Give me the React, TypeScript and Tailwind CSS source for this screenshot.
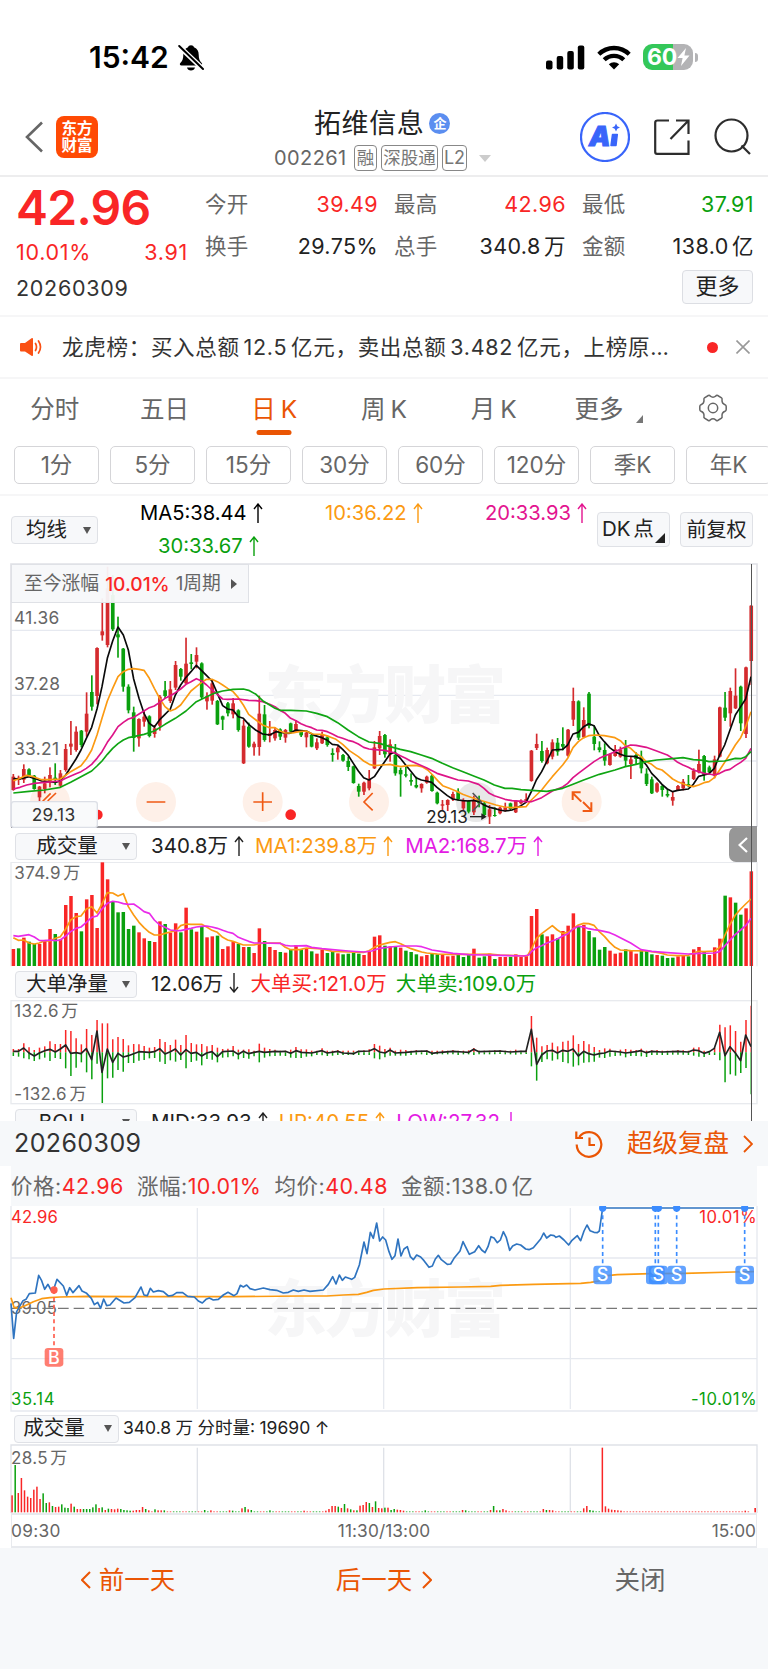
import type { ReactNode } from 'react';

// All charts draw on a 3-units-per-pixel grid
const FIRST_X = 40;
const STEP = 15.7;

const RED = '#d42b2e';
const GREEN = '#0aa00e';

// high,bodyTop,bodyBottom,low,colour
const CANDLES = `657,665,705,707,r 662,668,675,690,r 628,642,674,684,r 640,643,662,664,g 660,662,702,704,g 693,695,727,739,r 665,685,702,715,r
637,660,682,697,r 625,668,672,690,g 645,655,692,697,r 567,582,645,650,r 498,566,575,600,r 514,530,585,590,r 525,527,570,577,g 412,476,530,545,r
361,411,455,467,g 277,279,423,448,r 130,229,241,257,r 35,100,270,277,r 60,120,223,228,g 185,238,247,308,g 279,281,395,410,g 388,395,466,475,g
455,472,549,590,g 490,492,550,575,r 465,485,500,515,r 481,484,543,547,g 510,520,537,548,r 420,425,512,527,r 378,406,423,430,g 378,403,438,444,r
318,330,398,405,r 339,342,365,377,g 248,326,385,387,r 297,322,327,343,g 277,300,320,340,r 322,325,427,432,g 412,424,439,464,r 372,385,437,449,r
435,438,508,510,g 482,484,494,525,g 441,445,475,484,g 429,445,478,490,r 463,466,525,530,g 495,512,625,627,r 503,515,575,578,g 560,566,577,602,r
422,476,576,602,r 450,478,555,560,g 498,535,543,562,r 517,525,550,557,r 520,523,545,555,g 522,525,548,563,r 503,505,530,537,g 495,507,530,533,r
525,528,541,546,g 527,533,547,577,r 537,540,575,577,g 550,562,580,585,r 530,537,565,567,r 542,547,570,575,g 580,594,600,620,g 573,578,592,614,r
597,600,617,620,g 605,618,636,648,g 632,634,684,686,g 686,693,710,725,g 680,683,710,720,r 645,672,700,706,r 558,577,640,642,r 528,543,580,600,r
537,540,598,608,g 553,568,598,620,r 567,600,655,662,g 638,645,658,725,g 635,658,662,667,g 655,675,680,692,g 665,690,697,700,g 685,687,700,713,r
662,665,683,686,r 657,662,708,710,g 710,713,745,748,g 735,748,752,767,r 733,735,750,768,r 710,717,733,738,r 700,710,733,737,g 730,737,760,765,r
735,737,770,775,g 722,738,772,780,r 722,735,745,757,g 740,745,780,785,g 750,763,785,807,r 757,780,783,785,g 755,758,775,778,r 743,757,765,770,r
743,745,762,767,g 735,737,772,774,r 733,737,745,748,r 715,732,740,743,r 585,587,678,680,r 536,567,579,585,r 558,588,618,623,g 578,585,625,628,r
553,562,605,613,r 549,563,590,602,g 517,567,575,586,g 522,524,602,605,r 398,438,494,513,r 436,439,548,555,g 457,495,547,550,r 411,416,513,520,g
512,545,567,586,g 559,577,585,592,g 565,585,617,632,g 595,597,630,632,r 570,583,603,605,r 575,584,605,608,r 555,577,617,635,g 605,613,627,672,r
592,600,612,627,g 587,605,640,655,g 640,656,687,693,g 665,673,715,717,g 682,685,710,713,r 690,693,705,725,g 703,717,722,727,g 710,726,737,752,r
690,693,706,708,r 672,680,700,706,r 660,687,692,697,g 640,647,672,675,r 584,627,652,655,r 600,603,660,677,g 632,637,652,658,g 602,613,662,670,r
455,457,605,607,r 411,458,488,498,g 398,408,475,515,r 340,422,460,462,r 392,395,505,528,g 335,337,537,549,r 150,152,318,390,r`
  .split(/\s+/)
  .map(c => {
    const [high, top, bottom, low, dir] = c.split(',');
    return { high: +high, top: +top, bottom: +bottom, low: +low, up: dir === 'r' };
  });

const MA5 =
  '40,671 60,672 87,665 103,670 125,678 150,680 166,682 180,678 197,660 228,612 243,585 259,550 275,517 291,462 306,395 322,310 338,258 354,216 370,240 385,285 401,372 417,430 432,475 448,505 463,516 479,494 495,478 511,462 526,420 542,390 558,367 573,350 589,331 605,347 620,362 636,378 652,415 668,452 683,462 699,465 715,485 730,490 746,508 768,526 788,537 809,540 828,530 848,533 868,535 888,525 919,528 943,541 966,548 982,556 997,568 1013,570 1028,583 1044,600 1060,625 1075,648 1091,668 1107,675 1123,665 1138,643 1154,620 1170,597 1185,592 1201,610 1217,630 1232,648 1248,668 1264,675 1279,678 1295,682 1311,697 1327,710 1342,722 1358,732 1374,735 1389,737 1405,738 1421,736 1436,740 1452,750 1468,757 1483,760 1499,765 1515,768 1536,765 1563,752 1578,742 1594,710 1609,675 1625,650 1641,618 1657,585 1688,583 1703,570 1719,537 1735,532 1751,515 1766,506 1782,512 1798,542 1813,560 1829,578 1845,590 1861,598 1876,603 1908,605 1923,612 1939,630 1955,655 1970,670 1986,688 2002,702 2018,710 2033,706 2065,702 2080,688 2096,664 2112,660 2127,656 2143,640 2159,600 2174,570 2190,525 2206,480 2222,455 2237,432 2253,365';
const MA10 =
  '40,677 55,672 80,661 100,665 125,674 150,674 181,672 212,650 243,632 259,612 275,585 291,540 306,490 322,438 338,400 354,365 370,350 385,343 401,341 417,343 432,346 448,370 463,400 479,430 495,455 511,468 526,462 542,450 558,428 573,408 589,395 605,382 620,373 636,373 652,380 668,390 683,400 699,410 715,428 730,450 746,478 768,495 788,510 809,518 825,518 840,528 856,534 878,534 898,530 918,528 938,537 966,538 988,545 1008,553 1028,568 1048,587 1075,605 1091,618 1108,628 1123,632 1148,630 1170,628 1185,632 1203,635 1223,632 1248,631 1268,636 1283,645 1298,660 1313,677 1328,692 1348,700 1368,708 1388,718 1408,725 1428,732 1448,738 1468,744 1488,750 1513,756 1536,758 1578,755 1594,735 1625,705 1641,685 1657,665 1672,648 1688,630 1703,610 1719,578 1735,560 1751,548 1766,542 1786,540 1813,542 1845,548 1861,557 1876,572 1892,580 1908,595 1923,605 1939,620 1955,628 1970,640 1986,645 2002,658 2018,672 2033,680 2049,686 2065,692 2080,695 2096,690 2112,683 2127,680 2143,668 2159,645 2174,622 2190,597 2206,570 2222,548 2237,515 2253,470';
const MA20 =
  '40,702 60,697 80,690 103,685 134,682 181,678 197,670 228,656 243,650 259,640 275,628 291,610 306,590 322,562 338,540 354,515 370,502 385,492 401,487 417,477 432,468 448,458 463,453 479,442 495,430 511,422 526,413 542,402 558,388 573,380 589,371 605,378 620,390 636,405 652,418 668,432 683,433 715,432 746,436 768,437 788,440 809,448 825,455 840,466 856,475 872,490 888,497 903,506 919,513 935,518 950,525 966,526 982,530 997,537 1013,545 1028,550 1044,556 1060,560 1075,567 1091,577 1107,582 1123,584 1154,586 1185,594 1201,602 1217,610 1232,618 1248,625 1279,638 1311,655 1342,665 1374,675 1405,678 1436,688 1452,700 1468,715 1483,722 1515,733 1536,737 1578,740 1594,740 1625,728 1657,708 1688,696 1703,685 1719,668 1735,655 1751,643 1766,632 1782,620 1798,610 1813,603 1829,597 1845,590 1861,583 1876,576 1892,570 1908,571 1939,577 1970,588 2002,600 2018,610 2033,622 2049,630 2065,637 2080,645 2096,650 2112,655 2127,657 2143,660 2159,655 2174,647 2190,643 2206,632 2222,622 2237,610 2253,580';
const MA30 =
  '40,714 87,709 134,705 181,697 212,682 243,665 275,648 291,633 306,618 322,598 338,580 354,566 370,555 385,548 401,545 432,538 463,528 495,508 526,490 558,468 589,440 620,425 636,418 652,412 668,408 699,403 730,402 746,406 768,418 788,437 809,450 825,460 840,466 872,466 919,468 950,475 982,485 1013,503 1044,525 1075,545 1107,561 1138,565 1170,575 1201,583 1232,590 1264,600 1295,610 1327,625 1358,638 1389,650 1421,663 1452,675 1483,690 1515,700 1536,700 1563,704 1594,706 1641,709 1688,700 1719,688 1751,675 1798,658 1845,645 1876,635 1908,628 1939,620 1970,615 2018,611 2049,608 2080,614 2112,616 2127,620 2174,618 2206,610 2222,611 2237,605 2253,590';

const VOLUMES = `372r 370g 338r 350g 357g 357r 347r 312r 327g 343r 240r 213r 264r 319g 223r 210r 309r 112r 163r 230g 262g 261g 312g 302g 322r 340r 348g 351r 289r 297g
323r 295r 322g 248r 313g 320r 303g 337r 334r 332g 372r 364r 351r 357g 366r 366g 384r 310r 348g 366r 375r 381g 383r 375g 360r 373g 370r 379g 386r 374r
384g 381g 385r 388g 386g 383g 386g 390r 380r 335r 331r 362g 364r 366g 368r 377g 381g 388g 394r 390r 386g 388g 390r 394r 392r 390g 396g 390g 371r 398g
394g 386r 402g 396r 396r 396g 388r 396r 390r 273r 252r 328g 334r 328r 340g 318r 302r 265r 303g 300r 318g 337g 374g 366g 377r 386r 383r 373g 377r 386r
375g 377g 388g 390r 392g 399g 398g 394r 390r 394g 373r 366r 380g 390r 367r 341r 212g 217r 233g 269g 250r 139r`.split(/\s+/);

const VOL_MA1 =
  '40,338 55,346 71,345 87,354 103,357 118,354 134,347 150,348 166,340 181,335 197,312 212,285 228,275 243,273 259,252 275,245 291,264 306,237 322,203 338,204 354,213 370,206 385,245 401,270 417,292 432,308 448,322 463,330 479,330 495,325 511,321 526,318 542,302 558,297 573,298 605,298 620,306 636,316 652,322 668,337 683,345 699,349 715,355 730,360 762,360 778,356 793,354 840,354 856,367 872,374 900,374 919,369 966,372 997,379 1045,381 1092,382 1107,377 1123,367 1139,360 1155,356 1170,352 1186,350 1202,356 1217,364 1233,371 1249,376 1265,381 1280,384 1312,387 1343,388 1437,388 1469,387 1500,390 1547,392 1582,393 1594,372 1610,340 1625,326 1641,314 1657,302 1672,315 1688,325 1704,322 1719,312 1735,300 1751,295 1766,296 1782,301 1798,320 1814,335 1829,352 1845,367 1861,375 1892,377 1939,378 1971,382 1986,385 2002,390 2033,392 2065,391 2080,385 2096,379 2112,380 2143,378 2159,367 2175,330 2190,298 2206,270 2222,252 2237,237 2253,222';
const VOL_MA2 =
  '40,332 55,334 87,329 103,336 118,346 134,347 150,345 166,347 181,345 197,333 212,320 228,310 243,306 259,292 275,277 291,273 306,252 322,235 338,229 354,231 370,236 385,238 401,237 417,248 432,260 448,265 463,285 479,300 495,307 511,315 526,317 542,317 558,313 573,310 589,306 605,304 620,303 636,306 652,310 668,316 683,321 699,325 715,337 730,343 746,349 762,354 778,354 840,355 856,361 872,363 919,362 935,367 966,371 997,374 1045,378 1092,381 1115,378 1139,370 1170,366 1202,363 1249,363 1265,365 1280,370 1296,375 1327,380 1359,385 1406,389 1453,390 1500,391 1572,393 1586,390 1594,380 1610,368 1625,362 1641,354 1657,348 1672,342 1688,333 1704,326 1719,312 1735,304 1751,306 1766,311 1782,314 1798,316 1829,323 1845,330 1861,338 1892,354 1923,374 1955,379 2002,383 2065,387 2096,385 2143,384 2159,380 2175,362 2190,345 2206,328 2222,315 2237,302 2253,280';

// buy top / sell bottom around the zero line
const NET = `672/693 672/695 655/700 667/703 675/708 668/703 664/698 649/708 657/699 657/702 615/730 618/753 640/728 658/712 612/742 630/763 585/716 595/834 595/760
643/758 636/735 642/740 661/714 657/714 658/707 663/705 668/700 666/699 642/710 651/717 660/706 644/710 660/705 630/730 654/711 658/707 657/721 664/702 660/704
668/712 672/698 671/697 663/694 674/703 674/699 673/701 677/694 656/712 668/698 672/694 674/693 677/692 677/693 674/698 666/699 673/699 673/695 677/694 677/690
670/691 677/693 677/692 675/690 677/690 677/690 677/690 677/690 676/690 673/690 657/700 662/703 672/697 668/692 677/692 674/692 675/692 677/690 675/689 677/688
676/690 677/690 677/688 676/688 677/688 675/688 677/690 677/688 676/688 669/690 677/688 677/688 677/688 676/688 675/687 677/688 677/688 674/689 677/688 676/687
573/724 638/767 664/711 660/703 653/707 664/703 650/711 647/715 631/725 657/721 648/713 658/712 666/710 675/698 670/699 671/695 677/693 674/692 672/697 674/693
675/693 671/694 677/696 676/690 675/690 677/690 677/690 677/689 675/689 676/689 677/690 668/692 667/695 677/696 678/690 668/690 599/706 607/772 601/748 618/752
650/744 585/729 542/808`.split(/\s+/);

const NET_LINE =
  '40,679 55,679 71,669 87,684 103,693 118,684 134,677 150,673 166,681 181,672 197,660 212,685 228,683 243,686 259,671 275,704 291,618 306,742 322,672 338,712 354,685 370,696 385,692 401,686 417,680 448,682 463,680 479,671 495,687 511,680 526,672 542,690 558,674 573,685 589,682 605,693 620,684 636,680 652,695 668,680 699,678 715,688 730,679 746,686 762,682 778,679 793,682 825,679 840,680 856,679 872,685 888,677 904,682 935,684 966,677 982,684 1013,679 1029,684 1060,686 1076,679 1107,678 1123,671 1139,681 1155,684 1170,675 1186,684 1217,682 1249,679 1280,678 1296,685 1312,683 1359,679 1390,681 1406,682 1421,673 1437,680 1500,678 1531,681 1562,679 1578,679 1594,613 1610,718 1625,690 1641,678 1657,676 1672,684 1688,676 1704,679 1719,672 1735,693 1751,679 1766,686 1782,690 1798,686 1814,684 1829,678 1861,681 1877,684 1908,680 1923,677 1939,683 1955,679 1986,681 2033,679 2065,681 2080,675 2096,677 2112,685 2128,680 2143,670 2159,622 2175,692 2190,665 2206,684 2222,707 2237,630 2253,665';

const PRICE =
  '33,565 41,670 50,590 69,557 78,553 88,536 106,534 116,481 125,497 134,523 144,508 153,525 162,520 171,493 190,513 200,541 209,518 219,533 237,512 246,528 260,535 274,550 283,569 293,562 302,580 311,552 320,572 330,570 348,549 372,564 388,562 405,548 423,516 432,540 442,542 451,520 460,531 475,527 490,530 505,543 518,541 530,533 548,533 563,544 583,546 595,558 607,564 618,553 628,549 640,555 655,553 670,540 684,532 702,542 711,536 721,511 730,516 740,510 750,521 765,525 790,519 810,524 830,526 850,534 865,532 880,525 895,529 912,525 930,529 970,525 985,508 998,485 1008,507 1018,480 1027,496 1036,486 1055,493 1064,487 1078,450 1092,381 1101,416 1111,352 1120,370 1130,324 1139,378 1148,366 1157,375 1167,410 1176,433 1185,422 1194,372 1203,423 1212,402 1222,395 1231,425 1240,434 1250,420 1262,426 1272,437 1287,457 1297,453 1306,432 1315,421 1324,434 1342,448 1352,447 1362,430 1380,408 1389,380 1408,418 1424,410 1436,392 1445,405 1455,413 1464,395 1473,365 1482,369 1492,383 1501,375 1510,350 1519,368 1529,406 1538,393 1550,387 1562,390 1577,402 1587,404 1600,398 1622,372 1631,354 1640,369 1652,360 1662,362 1668,367 1678,363 1692,375 1706,390 1716,376 1732,362 1742,377 1752,348 1761,330 1770,347 1782,352 1792,353 1798,348 1808,279 2262,279';
const AVERAGE =
  '33,548 42,577 55,580 75,572 100,560 125,551 150,548 180,546 260,544 400,545 700,545 900,543 980,543 1030,540 1075,538 1100,532 1120,526 1152,522 1252,518 1382,516 1472,514 1502,511 1602,508 1742,505 1772,502 1797,498 1822,482 1852,479 1952,476 2052,475 2202,471 2262,470';

// minute volume, height above the base line; minutes left out are near zero
const MINUTES: Record<number, string> = {
  0: '51r', 1: '142g', 2: '58r', 3: '103r', 4: '66r', 5: '47r', 6: '43r', 7: '68r', 8: '77r', 9: '40r', 10: '57g', 11: '28g', 12: '30r', 13: '19g', 14: '16r',
  15: '17r', 16: '24g', 17: '14g', 18: '13g', 19: '26r', 20: '17g', 21: '10r', 22: '10r', 23: '10g', 24: '10g', 25: '10g', 26: '15g', 27: '24g', 28: '13r',
  29: '15g', 30: '7r', 31: '11g', 32: '10r', 33: '9r', 34: '11r', 35: '10g', 36: '7g', 37: '6g', 38: '5g', 39: '5r', 40: '7r', 41: '7r', 42: '16r', 43: '10g', 44: '6r',
  46: '9g', 47: '6r', 48: '6r', 49: '6g', 62: '7g', 64: '6r', 70: '6r', 71: '5g', 74: '12r', 75: '16g', 76: '9r', 77: '7g', 83: '6g', 94: '5r', 101: '5r', 102: '10r', 103: '19r', 104: '19r',
  105: '17g', 106: '13r', 107: '25g', 108: '12r', 109: '9g', 110: '6r', 111: '6g', 112: '20r', 113: '22r', 114: '31r', 115: '28g', 116: '16r', 117: '33g', 118: '13r',
  119: '12r', 120: '14g', 121: '14r', 122: '7g', 123: '10g', 124: '8r', 125: '7r', 126: '5r', 133: '6g', 145: '7r', 146: '6g', 154: '7r', 155: '19g', 156: '6r', 157: '6g', 158: '10r',
  159: '6r', 171: '10r', 172: '7g', 173: '7r', 174: '6r', 184: '12r', 185: '19r', 186: '7g', 187: '5g', 190: '194r', 191: '18r', 192: '11r', 193: '8r', 194: '7r', 195: '6r', 196: '5r', 236: '5r', 239: '13r',
};

const PERIODS = ['1分', '5分', '15分', '30分', '60分', '120分', '季K', '年K'];
const SELLS = [1808, 1966, 1975, 2030, 2234];

function Line({ points, color, width = 5 }: { points: string; color: string; width?: number }) {
  return <polyline points={points} fill="none" stroke={color} strokeWidth={width} strokeLinejoin="round" />;
}

function Watermark({ y }: { y: number }) {
  return (
    <text x="794" y={y} fontSize="186" fontWeight="900" textLength="724" fill="#f6f6f7">
      东方财富
    </text>
  );
}

function Stat({ label, value, color = 'text-[#222]' }: { label: string; value: string; color?: string }) {
  return (
    <div className="flex items-center justify-between">
      <span className="text-[21.5px] tracking-[0.3px] text-[#666]">{label}</span>
      <span className={`-mr-px text-[21.5px] tracking-[0.4px] [word-spacing:-3px] ${color}`}>{value}</span>
    </div>
  );
}

function Picker({ className, children }: { className: string; children: ReactNode }) {
  return (
    <div className={`flex shrink-0 items-center justify-center rounded border border-[#dfe1e6] bg-[#f7f8fa] text-[20.5px] text-[#222] ${className}`}>
      {children}
      <svg viewBox="0 0 8 7" className="absolute right-1.5 h-[7px] w-2">
        <path d="M0 0H8L4 7Z" fill="#555" />
      </svg>
    </div>
  );
}

function Arrow({ down = false }: { down?: boolean }) {
  return (
    <svg viewBox="0 0 10 20" className={`-mt-1 ml-1.5 inline-block h-5 w-2.5 ${down ? 'rotate-180' : ''}`} fill="none" stroke="currentColor" strokeWidth="1.4">
      <path d="M5 20V1M1 6L5 1L9 6" />
    </svg>
  );
}

function StatusBar() {
  return (
    <div className="flex h-[90px] items-center pt-6 pl-[89px]">
      <span className="w-[83px] text-[30px] leading-none font-semibold text-black">15:42</span>
      <svg viewBox="0 0 26 27" className="ml-[6px] h-[27px] w-[26px]">
        <path
          d="M13 1.2c1.6 0 2.7.8 3 2 3.4 1.2 4.7 4 4.7 7.5 0 4.4 1 6.3 3 8.3.9.9.4 2.6-1.1 2.6H3.4c-1.5 0-2-1.7-1.1-2.6 2-2 3-3.9 3-8.3 0-3.5 1.3-6.3 4.7-7.5.3-1.2 1.4-2 3-2ZM9 23.5h8c-.4 1.8-2 3-4 3s-3.6-1.2-4-3Z"
          fill="#000"
        />
        <path d="M1 2.2L25.5 25.5" stroke="#fff" strokeWidth="5" />
        <path d="M1.2 2L25 25" stroke="#000" strokeWidth="2" strokeLinecap="round" />
      </svg>
      <svg viewBox="0 0 39 25" className="ml-[342px] h-[25px] w-[39px]">
        <rect x="0" y="15.5" width="6.5" height="9" rx="2" />
        <rect x="10.7" y="11" width="6.5" height="13.5" rx="2" />
        <rect x="21.3" y="6" width="6.5" height="18.5" rx="2" />
        <rect x="31.8" y="0.5" width="6.5" height="24" rx="2" />
      </svg>
      <svg viewBox="0 0 34 25" className="ml-3 h-[25px] w-[34px]" fill="none" stroke="#000" strokeWidth="4.3">
        <path d="M1.8 9.2C10.2.9 23.8.9 32.2 9.2" />
        <path d="M7.2 14.8C12.6 9.5 21.4 9.5 26.8 14.8" />
        <path d="M17 24.5L11.8 19.2C14.8 16.5 19.2 16.5 22.2 19.2Z" fill="#000" stroke="none" />
      </svg>
      <div className="ml-3 flex h-[26px] w-[50px] items-center overflow-hidden rounded-[9px] bg-[linear-gradient(90deg,#34c759_60%,#b3b3b5_60%)] pl-[4px]">
        <span className="w-[30px] text-[23px] leading-none font-bold tracking-[-0.3px] text-white">60</span>
        <svg viewBox="0 0 13 18" className="h-[18px] w-[13px]">
          <path d="M9 0L.5 10H5.6L4 18L12.5 7.6H7.4Z" fill="#fff" />
        </svg>
      </div>
      <div className="ml-[2px] h-[9px] w-[3px] rounded-r-full bg-[#b3b3b5]" />
    </div>
  );
}

function Header() {
  return (
    <div className="flex h-[87px] items-center border-b-2 border-[#ededee] pt-1">
      <svg viewBox="0 0 18 32" className="mt-1 ml-[25px] h-8 w-[18px]" fill="none" stroke="#666" strokeWidth="2.6">
        <path d="M17 1.5L2 16L17 30.5" />
      </svg>
      <div className="mt-1 ml-[13px] flex h-[42px] w-[42px] flex-col items-center justify-center rounded-[8px] bg-[#ff4a04] text-[15.5px] leading-[17px] font-bold text-white">
        <span>东方</span>
        <span>财富</span>
      </div>
      <div className="mt-[7px] ml-[176px] flex w-[216px] flex-col items-start">
        <div className="ml-[40px] flex h-[38px] items-center text-[27px] leading-none tracking-[0.6px] text-[#222]">
          拓维信息
          <span className="ml-[5px] flex h-[21px] w-[21px] items-center justify-center rounded-full bg-[#5b8ef0] text-[13px] font-bold tracking-normal text-white">企</span>
        </div>
        <div className="mt-[2px] flex h-[28px] items-center gap-1 text-[17.5px] leading-none text-[#777]">
          <span className="w-[76px] text-[20px] tracking-[0.4px] text-[#666]">002261</span>
          <span className="flex h-[26px] w-[23px] items-center justify-center rounded border border-[#888]">融</span>
          <span className="flex h-[26px] w-[57px] items-center justify-center rounded border border-[#888]">深股通</span>
          <span className="flex h-[26px] w-[25px] items-center justify-center rounded border border-[#888] text-[18px]">L2</span>
          <svg viewBox="0 0 12 7" className="ml-2 h-[7px] w-3 shrink-0">
            <path d="M0 0H12L6 7Z" fill="#ccc" />
          </svg>
        </div>
      </div>
      <svg viewBox="0 0 50 50" className="mt-1 ml-[90px] h-[50px] w-[50px]" fill="none">
        <circle cx="25" cy="25" r="24" stroke="#3965fa" strokeWidth="2.2" />
        <text x="9" y="34" fontSize="27" fontWeight="900" fontStyle="italic" fill="#3965fa" stroke="#3965fa" strokeWidth="1">
          A
        </text>
        <path d="M32.5 22.5h4.8L36 33.500h-5Z" fill="#3965fa" stroke="#3965fa" strokeWidth="1.5" strokeLinejoin="round" />
        <path d="M36 11.5l1.3 2.7 2.7 1.3-2.7 1.3L36 19.5l-1.3-2.7-2.7-1.3 2.7-1.3Z" fill="#3965fa" />
      </svg>
      <svg viewBox="0 0 36 36" className="mt-1 ml-[24px] h-9 w-9" fill="none" stroke="#2d2d2d" strokeWidth="2.2">
        <path d="M15 1.5H3.5Q1.2 1.5 1.2 3.8V33Q1.2 34.8 3 34.8H34.5V21.5M22 1.5H34.5V15M16.5 20L34 2" />
      </svg>
      <svg viewBox="0 0 37 37" className="mt-1 ml-[24px] h-[37px] w-[37px]" fill="none" stroke="#2d2d2d" strokeWidth="2.2">
        <circle cx="17.5" cy="17.5" r="16" />
        <path d="M27.5 27.5L36 36" />
      </svg>
    </div>
  );
}

function Quote() {
  return (
    <div className="flex h-[140px] border-b-2 border-[#f6f6f7] pr-[15px] pl-[16px]">
      <div className="flex w-[172px] flex-col text-[#f92626]">
        <span className="mt-[8px] text-[48px] leading-[46px] font-semibold tracking-[-0.7px]">42.96</span>
        <div className="mt-[6px] flex h-[30px] items-center justify-between text-[21.5px] tracking-[0.7px]">
          <span>10.01%</span>
          <span>3.91</span>
        </div>
        <span className="mt-[6px] text-[21.5px] leading-[30px] tracking-[0.7px] text-[#333]">20260309</span>
      </div>
      <div className="ml-[17px] flex flex-1 flex-col">
        <div className="mt-[11px] grid grid-cols-[172px_171px_171px] gap-x-[17px] gap-y-[10px]">
          <Stat label="今开" value="39.49" color="text-[#f92626]" />
          <Stat label="最高" value="42.96" color="text-[#f92626]" />
          <Stat label="最低" value="37.91" color="text-[#0aa00e]" />
          <Stat label="换手" value="29.75%" />
          <Stat label="总手" value="340.8 万" />
          <Stat label="金额" value="138.0 亿" />
        </div>
        <div className="mt-[7px] flex h-[34px] w-[71px] items-center justify-center self-end rounded border border-[#dcdee3] bg-[#f7f8fa] text-[22px] text-[#222]">更多</div>
      </div>
    </div>
  );
}

function Ticker() {
  return (
    <div className="flex h-[62px] items-center border-b-2 border-[#f6f6f7] text-[#333]">
      <svg viewBox="0 0 22 18" className="ml-5 h-[18px] w-[22px]">
        <path d="M0 6Q0 5 1 5H5L11.5.3Q13 -.3 13 1V17Q13 18.3 11.5 17.7L5 13.5H1Q0 13.5 0 12.5Z" fill="#fa5014" />
        <path d="M15.5 5.5Q17.5 9 15.5 12.5M18.5 3Q22.5 9 18.5 15" fill="none" stroke="#fa5014" strokeWidth="1.7" strokeLinecap="round" />
      </svg>
      <span className="ml-[20px] w-[612px] text-[21.5px] tracking-[0.72px] whitespace-nowrap [word-spacing:-3px]">龙虎榜：买入总额 12.5 亿元，卖出总额 3.482 亿元，上榜原…</span>
      <span className="ml-[33px] h-[11px] w-[11px] rounded-full bg-[#f92626]" />
      <svg viewBox="0 0 14 14" className="ml-[18px] h-[14px] w-[14px]" stroke="#999" strokeWidth="1.6">
        <path d="M.5 .5L13.5 13.5M13.5 .5L.5 13.5" />
      </svg>
    </div>
  );
}

function Tabs() {
  return (
    <div className="border-b-2 border-[#f6f6f7]">
      <div className="grid h-[67px] grid-cols-7 pt-[9px] pb-[14px] text-center text-[24.5px] text-[#666] [word-spacing:-2px]">
        <span className="pt-[3px]">分时</span>
        <span className="pt-[3px]">五日</span>
        <span className="relative pt-[3px] text-[#ea5504]">
          日 K
          <i className="absolute bottom-[-3px] left-1/2 h-[5px] w-[35px] -translate-x-1/2 rounded-full bg-[#ea5504]" />
        </span>
        <span className="pt-[3px]">周 K</span>
        <span className="pt-[3px]">月 K</span>
        <span className="relative pt-[3px] pr-[9px]">
          更多
          <svg viewBox="0 0 7 8" className="absolute top-[27px] right-[15px] h-2 w-[7px]">
            <path d="M0 8L7 0V8Z" fill="#777" />
          </svg>
        </span>
        <svg viewBox="0 0 28 28" className="mt-[6px] h-7 w-7 justify-self-center" fill="none" stroke="#666" strokeWidth="1.5">
          <path d="M9.3 1.5Q10.5 1 11.3 2.2Q14 4.2 16.7 2.2Q17.5 1 18.7 1.5L22.5 3.8Q23.5 4.7 23 6Q22.8 9.5 26 10.7Q27.2 11.3 27.2 12.5V15.5Q27.2 16.7 26 17.3Q22.8 18.5 23 22Q23.5 23.3 22.5 24.2L18.7 26.5Q17.5 27 16.7 25.8Q14 23.8 11.3 25.8Q10.5 27 9.3 26.5L5.5 24.2Q4.5 23.3 5 22Q5.2 18.5 2 17.3Q.8 16.7 .8 15.5V12.5Q.8 11.3 2 10.7Q5.2 9.5 5 6Q4.5 4.7 5.5 3.8Z" />
          <circle cx="14" cy="14" r="4.7" />
        </svg>
      </div>
      <div className="flex h-[48px] gap-[11px] overflow-hidden pl-[14px] text-[22.5px] text-[#666]">
        {PERIODS.map(p => (
          <span key={p} className="flex h-[38px] w-[85px] shrink-0 items-center justify-center rounded-[5px] border border-[#d5d5d8]">
            {p}
          </span>
        ))}
      </div>
    </div>
  );
}

function AverageRow() {
  return (
    <div className="flex h-[67px] pl-[11px] text-[20.5px]">
      <Picker className="relative mt-[20px] h-[28px] w-[87px] pr-4">均线</Picker>
      <div className="ml-[42px] grid w-[452px] grid-cols-[185px_160px_1fr] grid-rows-[33px_33px] items-center pt-px text-[20.2px] whitespace-nowrap text-black">
        <span>MA5:38.44<Arrow /></span>
        <span className="text-[#fb9a12]">10:36.22<Arrow /></span>
        <span className="text-[#e3148f]">20:33.93<Arrow /></span>
        <span className="pl-[18px] text-[#0aa00e]">30:33.67<Arrow /></span>
      </div>
      <div className="relative mt-[16px] ml-[5px] flex h-[35px] w-[73px] items-center rounded border border-[#dfe1e6] bg-[#f7f8fa] pl-[4px] text-[#222] [word-spacing:-3px]">
        DK 点
        <svg viewBox="0 0 10 10" className="absolute right-1 bottom-[3px] h-2.5 w-2.5">
          <path d="M0 10L10 0V10Z" fill="#222" />
        </svg>
      </div>
      <div className="mt-[16px] ml-[10px] flex h-[35px] w-[73px] items-center justify-center rounded border border-[#dfe1e6] bg-[#f7f8fa] text-[20px] text-[#222]">前复权</div>
    </div>
  );
}

function CandleChart() {
  return (
    <div className="relative h-[268px]">
      <svg viewBox="0 24 2304 804" className="block h-[268px] w-[768px]">
        {[226, 421, 618].map(y => (
          <path key={y} d={`M33 ${y}H2271`} stroke="#e6e9f0" strokeWidth="4" />
        ))}
        <path d="M33 815V27H2271V815" fill="none" stroke="#e0e1e6" strokeWidth="5" />
        <Watermark y={490} />
        {[150, 468, 788, 1107, 1745].map(x => (
          <circle key={x} cx={x} cy="741" r="60" fill="#fef0e8" />
        ))}
        <circle cx="1428" cy="741" r="60" fill="#e8e8e8" />
        <text x="42" y="207" fontSize="52" letterSpacing="1" fill="#666">41.36</text>
        <text x="42" y="404" fontSize="52" letterSpacing="1" fill="#666">37.28</text>
        <text x="42" y="601" fontSize="52" letterSpacing="1" fill="#666">33.21</text>
        {CANDLES.map((c, i) => {
          const x = FIRST_X + i * STEP;
          return (
            <g key={i} fill={c.up ? RED : GREEN}>
              <rect x={x - 2.5} y={c.high} width="5" height={c.low - c.high} />
              <rect x={x - 5.5} y={c.top} width="11" height={c.bottom - c.top} />
            </g>
          );
        })}
        <Line points={MA5} color="#0a0a0a" />
        <Line points={MA10} color="#fb9a12" />
        <Line points={MA20} color="#dd1488" />
        <Line points={MA30} color="#0fa513" />
        <g fill="none" stroke="#f05a14" strokeWidth="5">
          <path d="M126 741L152 715M143 738L168 714M440 741H496M760 741H816M788 712V768M1118 714L1092 741L1118 766" />
          <path d="M1744 740L1718 714M1718 735V712H1742M1749 741L1774 766M1774 742V768H1748" strokeWidth="6" />
        </g>
        <path d="M1418 714L1444 741L1418 768" fill="none" stroke="#555" strokeWidth="5" />
        <text x="1279" y="803" fontSize="51" fill="#222">29.13</text>
        <path d="M1410 785H1446" stroke="#222" strokeWidth="4" />
        <path d="M1444 775L1460 785L1444 795Z" fill="#222" />
        <circle cx="293" cy="779" r="15" fill="#f92626" />
        <circle cx="872" cy="779" r="16" fill="#f92626" />
        <path d="M33 816H2271" stroke="#929298" strokeWidth="6" />
        <rect x="34" y="740" width="258" height="77" rx="8" fill="#f9fafb" stroke="#dcdfe6" strokeWidth="4" />
        <text x="95" y="798" fontSize="52" letterSpacing="1" fill="#333">29.13</text>
      </svg>
      <div className="absolute top-[1px] left-[11px] flex h-[39px] w-[238px] items-center border border-[#dfe1e6] bg-[#f7f8fa]/95 pt-px pl-[12px] text-[18.8px] whitespace-nowrap text-[#666]">
        至今涨幅
        <span className="mx-[6px] text-[19.2px] font-medium text-[#f92626]">10.01%</span>
        1周期
        <svg viewBox="0 0 6 10" className="ml-[10px] h-2.5 w-[6px]">
          <path d="M0 0L6 5L0 10Z" fill="#555" />
        </svg>
      </div>
    </div>
  );
}

function VolumeChart() {
  return (
    <svg viewBox="0 111 2304 315" className="block h-[105px] w-[768px]">
      <path d="M33 424V112H2271V424" fill="none" stroke="#e8eaee" strokeWidth="4" />
      <text x="43" y="163" fontSize="51" letterSpacing="1" wordSpacing="-8" fill="#666">374.9 万</text>
      {VOLUMES.map((v, i) => {
        const top = parseInt(v, 10);
        return <rect key={i} x={FIRST_X + i * STEP - 5} y={top} width="10.5" height={423 - top} fill={v.endsWith('r') ? '#f92626' : GREEN} />;
      })}
      <Line points={VOL_MA1} color="#fb9a12" />
      <Line points={VOL_MA2} color="#e92be9" />
    </svg>
  );
}

function NetChart() {
  return (
    <svg viewBox="0 525 2304 315" className="block h-[105px] w-[768px]">
      <rect x="33" y="527" width="2238" height="309" fill="none" stroke="#e8eaee" strokeWidth="4" />
      <text x="43" y="577" fontSize="51" letterSpacing="1" wordSpacing="-8" fill="#666">132.6 万</text>
      <text x="43" y="826" fontSize="51" letterSpacing="1" wordSpacing="-8" fill="#666">-132.6 万</text>
      {NET.map((n, i) => {
        const [top, bottom] = n.split('/').map(Number);
        const x = FIRST_X + i * STEP;
        return (
          <g key={i} strokeWidth="4.5">
            <path d={`M${x} ${top}V682`} stroke="#f92626" />
            <path d={`M${x} 682V${bottom}`} stroke={GREEN} />
          </g>
        );
      })}
      <Line points={NET_LINE} color="#222" />
    </svg>
  );
}

function Charts() {
  return (
    <div className="relative h-[558px] overflow-hidden">
      <CandleChart />
      <div className="flex h-[31px] items-center pl-[15px] text-[20.5px] whitespace-nowrap text-[#222]">
        <Picker className="relative h-[27px] w-[122px] pr-[18px]">成交量</Picker>
        <span className="ml-[14px]">340.8万<Arrow /></span>
        <span className="ml-[11px] text-[#fb9a12]">MA1:239.8万<Arrow /></span>
        <span className="ml-[12px] text-[#e31be3]">MA2:168.7万<Arrow /></span>
      </div>
      <VolumeChart />
      <div className="flex h-[33px] items-center pt-px pl-[15px] text-[20.5px] whitespace-nowrap text-[#222]">
        <Picker className="relative h-[27px] w-[122px] pr-[18px]">大单净量</Picker>
        <span className="ml-[14px]">12.06万<Arrow down /></span>
        <span className="ml-[11px] tracking-[0.1px] text-[#f92626]">大单买:121.0万</span>
        <span className="ml-[9px] tracking-[0.1px] text-[#0aa00e]">大单卖:109.0万</span>
      </div>
      <NetChart />
      <div className="flex h-[33px] items-center pt-[2px] pl-[15px] text-[20.5px] whitespace-nowrap text-[#222]">
        <Picker className="relative h-[27px] w-[122px] pr-[22px]">BOLL</Picker>
        <span className="ml-[14px]">MID:33.93<Arrow /></span>
        <span className="ml-[11px] text-[#fb9a12]">UP:40.55<Arrow /></span>
        <span className="ml-[11px] text-[#e31be3]">LOW:27.32<Arrow down /></span>
      </div>
      <div className="absolute top-[264px] right-[11px] flex h-[35px] w-[28px] items-center justify-center rounded-l-[7px] bg-[#979797]">
        <svg viewBox="0 0 10 16" className="h-4 w-2.5" fill="none" stroke="#fff" strokeWidth="2.2">
          <path d="M9 1L1.5 8L9 15" />
        </svg>
      </div>
      <div className="absolute top-[1px] left-[751px] h-[560px] w-px bg-[#555]" />
    </div>
  );
}

function Marker({ x, y, dotY, label, color }: { x: number; y: number; dotY: number; label: string; color: string }) {
  return (
    <g>
      <path d={`M${x} ${dotY}V${y - 28}`} stroke={color} strokeWidth="5" strokeDasharray="12 10" />
      <circle cx={x} cy={dotY} r="11" fill={color} />
      <rect x={x - 28} y={y - 28} width="56" height="56" rx="10" fill={color} fillOpacity="0.8" />
      <text x={x} y={y + 19} fontSize="54" fontWeight="500" textAnchor="middle" fill="#fff">
        {label}
      </text>
    </g>
  );
}

function Intraday() {
  return (
    <>
      <div className="flex h-[45px] items-center bg-[#f6f8fa] pl-[14px]">
        <span className="w-[127px] text-[25px] tracking-[0.4px] text-[#333]">20260309</span>
        <svg viewBox="0 0 28 28" className="ml-[434px] h-7 w-7" fill="none" stroke="#ea5504" strokeWidth="2.2">
          <path d="M4.2 7A12.3 12.3 0 1 1 1.7 14.5M1.3 1.5V8H8M14.5 7.500V15H20" />
        </svg>
        <span className="ml-[24px] w-[103px] text-[25.5px] whitespace-nowrap text-[#ea5504]">超级复盘</span>
        <svg viewBox="0 0 10 18" className="ml-[13px] h-[18px] w-2.5" fill="none" stroke="#ea5504" strokeWidth="1.8">
          <path d="M1 1L9 9L1 17" />
        </svg>
      </div>
      <div className="mx-[11px] flex h-[40px] items-center gap-[13px] bg-[#f6f8fa] text-[21.5px] tracking-[0.5px] whitespace-nowrap text-[#666] [word-spacing:-3px]">
        <span>价格:<b className="font-normal text-[#f92626]">42.96</b></span>
        <span>涨幅:<b className="font-normal text-[#f92626]">10.01%</b></span>
        <span>均价:<b className="font-normal text-[#f92626]">40.48</b></span>
        <span>金额:138.0 亿</span>
      </div>
      <svg viewBox="0 273 2304 618" className="block h-[206px] w-[768px]">
        <path d="M33 273V888H2271V273M592 279V882M1151 279V882M1711 279V882M33 429H2271M33 731H2271" fill="none" stroke="#e6e9ef" strokeWidth="4" />
        <Watermark y={650} />
        <text x="33" y="324" fontSize="50" letterSpacing="0.5" fill="#f92626">42.96</text>
        <text x="33" y="596" fontSize="50" letterSpacing="0.5" fill="#666">39.05</text>
        <text x="33" y="869" fontSize="50" letterSpacing="2" fill={GREEN}>35.14</text>
        <text x="2271" y="324" fontSize="50" letterSpacing="1.5" textAnchor="end" fill="#f92626">10.01%</text>
        <text x="2271" y="869" fontSize="50" letterSpacing="1.5" textAnchor="end" fill={GREEN}>-10.01%</text>
        <path d="M33 580H2271" stroke="#777" strokeWidth="4" strokeDasharray="32 15" />
        <Line points={AVERAGE} color="#fb9a12" />
        <Line points={PRICE} color="#2f74c0" />
        <Marker x={162} y={727} dotY={525} label="B" color="#ff5e4d" />
        {SELLS.map(x => (
          <Marker key={x} x={x} y={480} dotY={279} label="S" color="#3b8cff" />
        ))}
      </svg>
      <div className="flex h-[32px] items-center pt-px pl-[14px] text-[17.5px] text-[#222]">
        <Picker className="relative h-[28px] w-[105px] pr-[25px]">成交量</Picker>
        <span className="ml-[4px] whitespace-nowrap [word-spacing:-0.5px]">340.8 万 分时量: 19690 ↑</span>
      </div>
      <svg viewBox="0 102 2304 207" className="block h-[69px] w-[768px]">
        <path d="M33 309V105H2271V309M592 113V306M1151 113V306M1711 113V306" fill="none" stroke="#dfe2e8" strokeWidth="4" />
        <text x="33" y="163" fontSize="51" letterSpacing="1" wordSpacing="-8" fill="#666">28.5 万</text>
        {Array.from({ length: 238 }, (_, i) => {
          const v = MINUTES[i] ?? (i > 195 || i % 5 < 2 ? '4r' : '4g');
          const h = parseInt(v, 10);
          return <rect key={i} x={34 + i * 9.32} y={307 - h} width="4.5" height={h} fill={v.endsWith('r') ? '#f92626' : GREEN} fillOpacity={h < 5 ? 0.55 : 1} />;
        })}
        <rect x="2263" y="294" width="5" height="13" fill="#f92626" />
      </svg>
      <div className="mx-[11px] grid h-[35px] grid-cols-3 items-center border-x border-y-2 border-[#e8eaee] pt-px text-[17.3px] text-[#666]">
        <span className="-ml-px tracking-[0.3px]">09:30</span>
        <span className="text-center tracking-[0.1px]">11:30/13:00</span>
        <span className="text-right">15:00</span>
      </div>
    </>
  );
}

function Footer() {
  return (
    <div className="grid h-[121px] grid-cols-3 bg-[#f6f8fa] pt-[13px] text-[25.5px] text-[#ea5504]">
      <div className="flex h-[38px] items-center justify-center gap-[8px]">
        <svg viewBox="0 0 10 18" className="h-[18px] w-2.5" fill="none" stroke="currentColor" strokeWidth="2">
          <path d="M9 1L1 9L9 17" />
        </svg>
        前一天
      </div>
      <div className="flex h-[38px] items-center justify-center gap-[10px]">
        后一天
        <svg viewBox="0 0 10 18" className="h-[18px] w-2.5" fill="none" stroke="currentColor" strokeWidth="2">
          <path d="M1 1L9 9L1 17" />
        </svg>
      </div>
      <div className="flex h-[38px] items-center justify-center text-[#666]">关闭</div>
    </div>
  );
}

export default function App() {
  return (
    <div className="h-[1669px] w-[768px] overflow-hidden bg-white font-[Inter,'Noto_Sans_CJK_SC',sans-serif]">
      <StatusBar />
      <Header />
      <Quote />
      <Ticker />
      <Tabs />
      <AverageRow />
      <Charts />
      <Intraday />
      <Footer />
    </div>
  );
}
